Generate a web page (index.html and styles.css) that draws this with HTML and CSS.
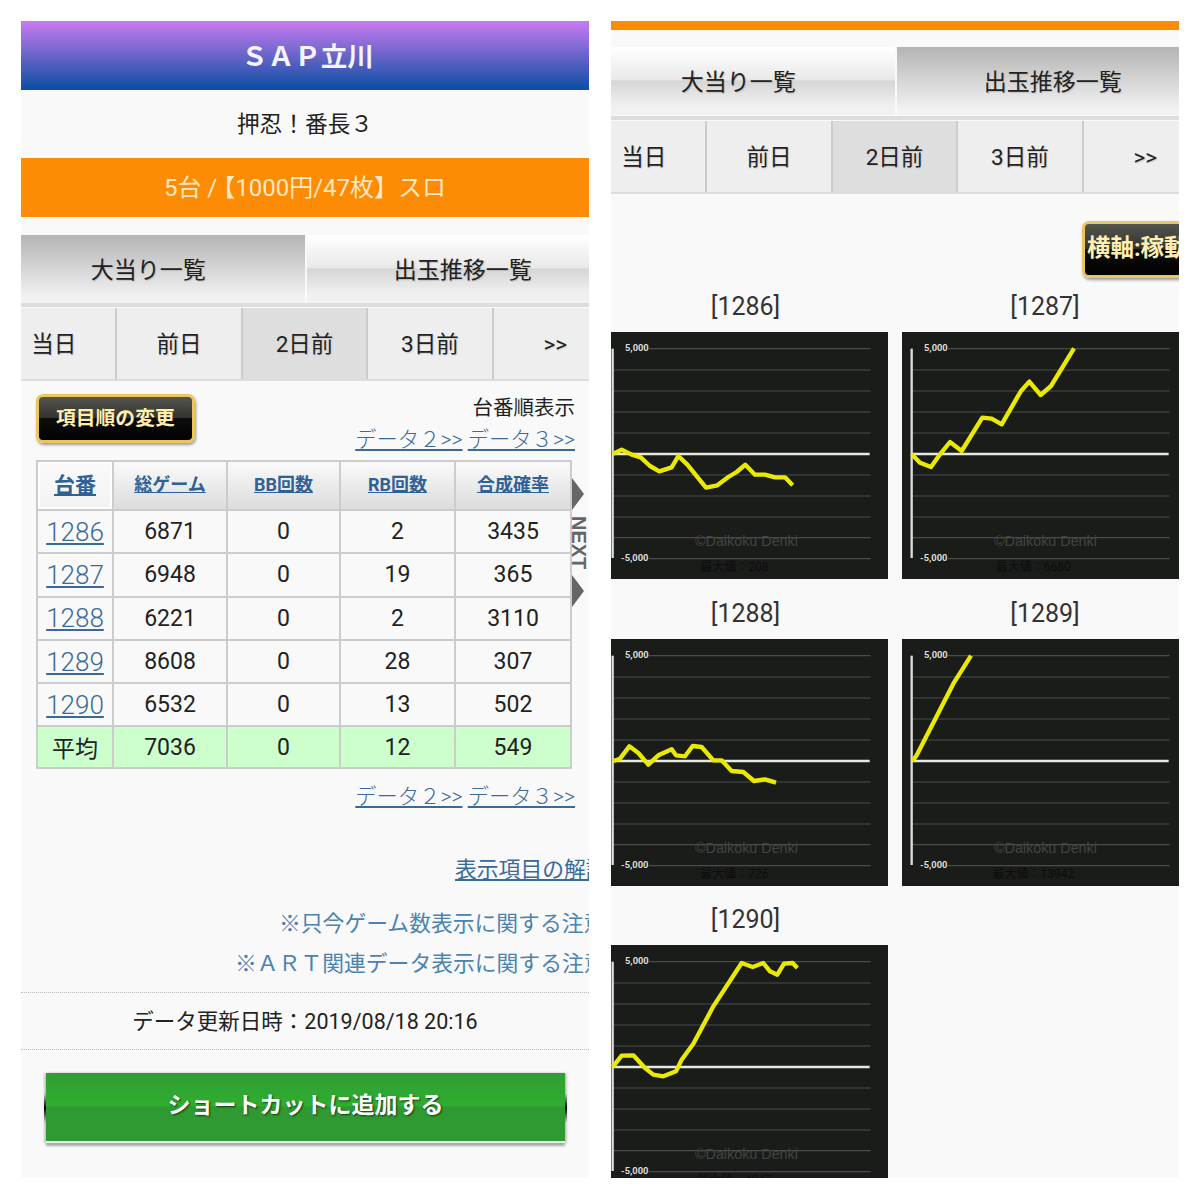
FILE: index.html
```html
<!DOCTYPE html>
<html lang="ja">
<head>
<meta charset="utf-8">
<title>SAP立川 押忍！番長３</title>
<link rel="stylesheet" href="styles.css">
</head>
<body>
<main class="panel">
  <h1 class="site-title">ＳＡＰ立川</h1>
  <p class="machine">押忍！番長３</p>
  <p class="rate-bar">5台 / <span class="open-bracket">【</span>1000円/47枚】スロ</p>
  <nav class="tabs">
    <a class="tab tab-on">大当り一覧</a>
    <a class="tab tab-off">出玉推移一覧</a>
  </nav>
  <nav class="days">
    <a class="day">当日</a><a class="day">前日</a><a class="day day-on">2日前</a><a class="day">3日前</a><a class="day">&gt;&gt;</a>
  </nav>
  <div class="toolbar">
    <a class="gold-btn">項目順の変更</a>
    <div class="toolbar-side">
      <div class="sort-label">台番順表示</div>
      <div class="data-links"><a>データ２&gt;&gt;</a> <a>データ３&gt;&gt;</a></div>
    </div>
  </div>
  <div class="table-wrap">
    <table class="data">
      <thead>
        <tr><th class="th-on"><a>台番</a></th><th><a>総ゲーム</a></th><th><a>BB回数</a></th><th><a>RB回数</a></th><th><a>合成確率</a></th></tr>
      </thead>
      <tbody>
        <tr><td><a class="num-link">1286</a></td><td>6871</td><td>0</td><td>2</td><td>3435</td></tr>
        <tr><td><a class="num-link">1287</a></td><td>6948</td><td>0</td><td>19</td><td>365</td></tr>
        <tr><td><a class="num-link">1288</a></td><td>6221</td><td>0</td><td>2</td><td>3110</td></tr>
        <tr><td><a class="num-link">1289</a></td><td>8608</td><td>0</td><td>28</td><td>307</td></tr>
        <tr><td><a class="num-link">1290</a></td><td>6532</td><td>0</td><td>13</td><td>502</td></tr>
        <tr class="avg"><td>平均</td><td>7036</td><td>0</td><td>12</td><td>549</td></tr>
      </tbody>
    </table>
    <div class="next-hint">
      <span class="next-arrow"></span>
      <span class="next-text">NEXT</span>
      <span class="next-arrow"></span>
    </div>
  </div>
  <div class="data-links links-bottom"><a>データ２&gt;&gt;</a> <a>データ３&gt;&gt;</a></div>
  <div class="clip-line help-line"><a class="under">表示項目の解説</a></div>
  <div class="clip-line note-one"><a>※只今ゲーム数表示に関する注意</a></div>
  <div class="clip-line note-two"><a>※ＡＲＴ関連データ表示に関する注意</a></div>
  <div class="updated">データ更新日時：2019/08/18 20:16</div>
  <a class="green-btn">ショートカットに追加する</a>
</main>

<main class="panel">
  <div class="rate-strip"></div>
  <nav class="tabs">
    <a class="tab tab-off">大当り一覧</a>
    <a class="tab tab-on">出玉推移一覧</a>
  </nav>
  <nav class="days">
    <a class="day">当日</a><a class="day">前日</a><a class="day day-on">2日前</a><a class="day">3日前</a><a class="day">&gt;&gt;</a>
  </nav>
  <div class="axis-row"><a class="gold-btn axis-btn">横軸:稼動ゲーム数</a></div>
  <div class="charts">
    <figure class="chart-cell">
      <figcaption>[1286]</figcaption>
      <svg class="chart" viewBox="0 0 855 741">
        <defs>
          <g id="frame">
            <path class="grid" d="M138 50H803M29 114H803M29 177H803M29 240H803M29 303H803M29 429H803M29 492H803M29 555H803M29 617H803M138 680H803"/>
            <path class="zero" d="M29 366H800"/>
            <path class="axis" d="M29 50V678"/>
            <text class="scale" x="66" y="58">5,000</text>
            <text class="scale" x="54" y="688">-5,000</text>
            <text class="mark" x="276" y="641">©Daikoku Denki</text>
          </g>
        </defs>
        <use href="#frame"/>
        <text class="maxv" x="394" y="716">最大値：208</text>
        <polyline class="line" transform="translate(-9 -38)" points="38,404 65,391 95,406 122,414 150,440 178,456 215,444 235,410 262,436 318,505 352,498 385,473 410,458 436,436 465,466 495,466 525,474 555,474 578,498"/>
      </svg>
    </figure>
    <figure class="chart-cell">
      <figcaption>[1287]</figcaption>
      <svg class="chart" viewBox="0 0 855 741">
        <use href="#frame"/>
        <text class="maxv" x="394" y="716">最大値：6680</text>
        <polyline class="line" transform="translate(-21 -38)" points="50,405 75,430 108,443 135,405 165,368 200,395 262,295 290,298 320,315 378,215 403,187 437,227 468,200 537,87"/>
      </svg>
    </figure>
    <figure class="chart-cell">
      <figcaption>[1288]</figcaption>
      <svg class="chart" viewBox="0 0 855 741">
        <use href="#frame"/>
        <text class="maxv" x="394" y="716">最大値：726</text>
        <polyline class="line" transform="translate(-9 -26)" points="38,393 60,385 88,348 115,368 145,403 175,375 215,357 228,375 255,378 278,347 305,350 340,390 365,390 395,422 430,425 462,452 495,447 528,457"/>
      </svg>
    </figure>
    <figure class="chart-cell">
      <figcaption>[1289]</figcaption>
      <svg class="chart" viewBox="0 0 855 741">
        <use href="#frame"/>
        <text class="maxv" x="394" y="716">最大値：13942</text>
        <polyline class="line" transform="translate(-21 -26)" points="52,393 65,375 175,160 228,76"/>
      </svg>
    </figure>
    <figure class="chart-cell">
      <figcaption>[1290]</figcaption>
      <svg class="chart" viewBox="0 0 855 741">
        <use href="#frame"/>
        <text class="maxv" x="394" y="716">最大値：4947</text>
        <polyline class="line" transform="translate(-9 -46)" points="38,412 65,378 100,377 135,415 160,435 190,440 228,425 245,390 280,342 340,230 425,100 458,112 490,100 510,125 532,135 552,102 578,100 592,115"/>
      </svg>
    </figure>
  </div>
</main>
</body>
</html>
```

FILE: styles.css
```css
* { box-sizing: border-box; }

html, body { margin: 0; background: #fff; }

body {
  display: flex;
  gap: 22px;
  padding: 21px;
  height: 1200px;
  overflow: hidden;
  font-family: Roboto, "Noto Sans CJK JP", sans-serif;
  color: #222;
}

.panel {
  width: 568px;
  height: 1157px;
  flex: none;
  overflow: hidden;
  background: #f9f9f9;
}

.site-title {
  margin: 0;
  height: 69px;
  padding-left: 5px;
  line-height: 72px;
  text-align: center;
  font-size: 26.5px;
  font-weight: 700;
  color: #f4f4ff;
  background: linear-gradient(#c97bf2, #094ea1);
}

.machine {
  margin: 0;
  height: 68px;
  line-height: 69px;
  text-align: center;
  font-size: 22.7px;
}

.rate-bar {
  margin: 0;
  height: 59px;
  line-height: 61px;
  text-align: center;
  font-size: 24px;
  color: #ffe8c4;
  background: #fd8b03;
}

.open-bracket { font-feature-settings: "halt"; }

.rate-strip {
  height: 9px;
  background: #fd8b03;
}

.tabs {
  display: flex;
  gap: 2px;
  height: 72px;
  margin: 18px 0 0 -29px;
  width: 627px;
  padding-bottom: 4px;
  background: linear-gradient(#f9f9f9 94%, #ddd 94%);
}

.rate-strip + .tabs { margin-top: 17px; height: 73px; padding-bottom: 5px; }

.tab {
  flex: 1;
  height: 68px;
  line-height: 71px;
  text-align: center;
  font-size: 23px;
  text-shadow: 1px 1px 1px #bdbdbd;
}

.tab-on { background: linear-gradient(#b4b4b4, #f2f2f2 92%); }

.tab-off {
  background: linear-gradient(#fff, #e9e9e9 48%, #d6d6d6 50%, #efefef 85%, #f2f2f2);
}

.days {
  display: flex;
  gap: 2px;
  width: 640px;
  height: 73px;
  margin: 1px 0 0 -29px;
  border-bottom: 2px solid #ddd;
}

.day {
  flex: none;
  width: 123.4px;
  line-height: 73px;
  text-align: center;
  font-size: 22.5px;
  background: #eee;
  box-shadow: 1px 0 0 #ccc, -1px 0 0 #ccc;
  text-shadow: 1px 1px 1px #ccc;
}

.day-on { background: #dedede; }

.toolbar {
  display: flex;
  justify-content: space-between;
  align-items: flex-start;
  height: 79px;
  padding: 13px 14px 0 15px;
}

.gold-btn {
  display: block;
  height: 49px;
  padding: 0 17px;
  line-height: 43px;
  white-space: nowrap;
  font-size: 19.8px;
  font-weight: 700;
  color: #ffeeb0;
  border: 3px solid #e9c75e;
  border-radius: 7px;
  background: linear-gradient(#55554f, #33332f 48%, #0e0e0e 50%, #000);
  box-shadow: 1px 2px 3px #999;
}

.toolbar-side {
  margin-top: -2px;
  text-align: right;
  line-height: 32px;
}

.sort-label { font-size: 20.5px; }

.data-links {
  font-size: 21.3px;
  font-weight: 300;
  line-height: 32px;
  text-align: right;
  color: #3a6a9a;
}

.data-links a { text-decoration: underline; }

.table-wrap {
  position: relative;
  margin-left: 15px;
  width: 536px;
}

.data {
  width: 536px;
  table-layout: fixed;
  border-collapse: collapse;
  text-align: center;
  font-size: 23px;
}

.data th, .data td {
  padding: 0;
  border: 2px solid #ccc;
}

.data th {
  height: 49px;
  padding-bottom: 5px;
  font-size: 18px;
  font-weight: 700;
  color: #2e6198;
  background: linear-gradient(#fafafa, #dcdcdc);
}

.data th a { text-decoration: underline; }

.data th:nth-child(1) { width: 76px; }
.data th:nth-child(2) { width: 114px; }
.data th:nth-child(3) { width: 113px; }
.data th:nth-child(4) { width: 115px; }

.data th.th-on {
  font-size: 21px;
  background: linear-gradient(#fafafa, #f2f2f2);
  box-shadow: inset 0 0 0 2px #fff;
}

.data td { height: 43.3px; }

.num-link {
  font-size: 26px;
  font-weight: 300;
  color: #3a6a9a;
  text-decoration: underline;
}

.avg td { height: 41.5px; background: #ccffcc; }

.next-hint {
  position: absolute;
  left: 536px;
  top: 18px;
  width: 14px;
  display: flex;
  flex-direction: column;
  align-items: flex-start;
  gap: 6px;
}

.next-arrow {
  width: 0;
  height: 0;
  border-top: 16px solid transparent;
  border-bottom: 16px solid transparent;
  border-left: 12px solid #666;
}

.next-text {
  writing-mode: vertical-rl;
  font-family: "Liberation Sans", sans-serif;
  font-size: 20px;
  font-weight: 700;
  line-height: 14px;
  color: #666;
}

.links-bottom {
  margin-top: 12px;
  padding-right: 14px;
}

.clip-line {
  line-height: 32px;
  font-size: 21.8px;
  font-weight: 400;
  white-space: nowrap;
  color: #4a82b0;
}

.under { color: #3a6a9a; text-decoration: underline; }

.help-line { margin-top: 41px; padding-left: 434px; }
.note-one { margin-top: 22px; padding-left: 258px; }
.note-two { margin-top: 8px; padding-left: 214px; }

.updated {
  height: 58px;
  margin-top: 12px;
  line-height: 57px;
  text-align: center;
  font-size: 21.5px;
  border-top: 1px dotted #bbb;
  border-bottom: 1px dotted #bbb;
}

.green-btn {
  position: relative;
  display: block;
  width: 519px;
  height: 70px;
  margin: 23px 0 0 25px;
  line-height: 66px;
  text-align: center;
  font-size: 23px;
  font-weight: 700;
  color: #fff;
  text-shadow: 1px 1px 2px #0b3d0b;
  background: linear-gradient(#2f9e32, #2fae30 48%, #2f9a31 50%, #2f9a31);
  border-bottom: 2px solid #e8f4e8;
  box-shadow: 0 3px 2px #aaa, 2px 0 2px #ccc, -2px 0 2px #ccc;
}

.green-btn::before, .green-btn::after {
  content: "";
  position: absolute;
  top: 20px;
  width: 2px;
  height: 30px;
  background: linear-gradient(transparent, #000 50%, transparent);
}

.green-btn::before { left: -2px; }
.green-btn::after { right: -2px; }

.axis-row {
  height: 86px;
  padding: 27px 0 0 471px;
}

.axis-btn {
  width: 200px;
  height: 57px;
  padding: 0 2px;
  line-height: 49px;
  font-size: 23.5px;
}

.charts {
  display: grid;
  grid-template-columns: 299px 300px;
  width: 599px;
  margin-left: -15px;
}

.chart-cell {
  margin: 0;
  padding-bottom: 7.5px;
}

.chart-cell figcaption {
  height: 52px;
  line-height: 53px;
  text-align: center;
  font-size: 25px;
  color: #333;
}

.chart {
  display: block;
  width: 285px;
  height: 247px;
  margin-left: 7px;
  background: #1a1c1a;
}

.grid { fill: none; stroke: #4a4c4a; stroke-width: 3.5; }
.zero { fill: none; stroke: #e8e8e0; stroke-width: 7; }
.axis { fill: none; stroke: #ddd; stroke-width: 7; }
.line { fill: none; stroke: #eaea00; stroke-width: 13; stroke-linejoin: round; }

.scale {
  font-family: Roboto, sans-serif;
  font-size: 28px;
  font-weight: 700;
  fill: #ddd;
}

.mark {
  font-family: "Liberation Sans", sans-serif;
  font-size: 43px;
  fill: #424442;
}

.maxv {
  font-family: Roboto, "Noto Sans CJK JP", sans-serif;
  font-size: 36px;
  text-anchor: middle;
  fill: #0c0c0c;
}
```
